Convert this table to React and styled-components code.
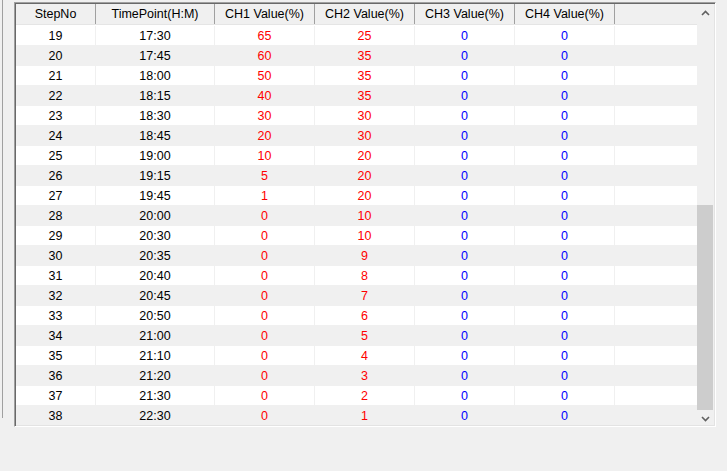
import React from "react";
import styled, { createGlobalStyle } from "styled-components";

const Global = createGlobalStyle`
  html, body { margin: 0; padding: 0; background: #f0f0f0; }
  body { font-family: "Liberation Sans", Arial, sans-serif; }
`;

const Page = styled.div`
  width: 727px;
  height: 471px;
  background: #f0f0f0;
  display: flex;
  align-items: flex-start;
  overflow: hidden;
`;

const SideEdge = styled.div`
  width: 1px;
  height: 418px;
  margin-left: 2px;
  background: #a0a0a0;
  flex: none;
`;

const Frame = styled.div`
  margin-left: 11px;
  margin-top: 2px;
  width: 702px;
  height: 425px;
  box-sizing: border-box;
  border-top: 1px solid #a0a0a0;
  border-left: 1px solid #a0a0a0;
  border-right: 1px solid #ffffff;
  border-bottom: 1px solid #ffffff;
  box-shadow: inset 1px 1px 0 #696969, inset -1px -1px 0 #e3e3e3;
  padding: 1px 1px 1px 1px;
  display: flex;
  flex: none;
  background: #ffffff;
`;

const ListArea = styled.div`
  flex: 1;
  display: flex;
  flex-direction: column;
  overflow: hidden;
  background: #ffffff;
`;

const cols = "80px 119px 100px 100px 100px 100px 1fr";

const HeaderRow = styled.div`
  display: grid;
  grid-template-columns: ${cols};
  height: 20px;
  background: #f0f0f0;
  border-bottom: 1px solid #e5e5e5;
  box-shadow: 0 1px 0 #ffffff;
  margin-bottom: 1px;
  flex: none;
`;

const HeaderCell = styled.div`
  display: flex;
  align-items: center;
  justify-content: center;
  font-size: 12.5px;
  color: #000000;
  border-right: ${(p) => (p.$last ? "none" : "1px solid #a0a0a0")};
  white-space: nowrap;
`;

const Row = styled.div`
  display: grid;
  grid-template-columns: ${cols};
  height: 20px;
  flex: none;
  background: ${(p) => (p.$alt ? "#f0f0f0" : "#ffffff")};
`;

const Cell = styled.div`
  display: flex;
  align-items: center;
  justify-content: center;
  font-size: 12.5px;
  color: ${(p) => p.$color || "#000000"};
  border-right: ${(p) => (p.$last ? "none" : "1px solid #f0f0f0")};
  border-bottom: 1px solid #f0f0f0;
  box-sizing: border-box;
`;

const Scrollbar = styled.div`
  width: 17px;
  flex: none;
  background: #f0f0f0;
  display: flex;
  flex-direction: column;
  align-items: stretch;
`;

const ArrowBtn = styled.div`
  height: 17px;
  display: flex;
  align-items: center;
  justify-content: center;
  flex: none;
`;

const Track = styled.div`
  flex: 1;
  display: flex;
  flex-direction: column;
  padding: 0 1px 0 0;
`;

const Thumb = styled.div`
  margin-top: 184px;
  height: 205px;
  background: #cdcdcd;
`;

const data = [
  [19, "17:30", 65, 25],
  [20, "17:45", 60, 35],
  [21, "18:00", 50, 35],
  [22, "18:15", 40, 35],
  [23, "18:30", 30, 30],
  [24, "18:45", 20, 30],
  [25, "19:00", 10, 20],
  [26, "19:15", 5, 20],
  [27, "19:45", 1, 20],
  [28, "20:00", 0, 10],
  [29, "20:30", 0, 10],
  [30, "20:35", 0, 9],
  [31, "20:40", 0, 8],
  [32, "20:45", 0, 7],
  [33, "20:50", 0, 6],
  [34, "21:00", 0, 5],
  [35, "21:10", 0, 4],
  [36, "21:20", 0, 3],
  [37, "21:30", 0, 2],
  [38, "22:30", 0, 1],
];

const Chevron = ({ up }) => (
  <svg width="9" height="6" viewBox="0 0 9 6">
    <polyline
      points={up ? "1,5 4.5,1.5 8,5" : "1,1 4.5,4.5 8,1"}
      fill="none"
      stroke="#606060"
      strokeWidth="1.6"
    />
  </svg>
);

export default function App() {
  const headers = [
    "StepNo",
    "TimePoint(H:M)",
    "CH1 Value(%)",
    "CH2 Value(%)",
    "CH3 Value(%)",
    "CH4 Value(%)",
    "",
  ];
  return (
    <>
      <Global />
      <Page>
        <SideEdge />
        <Frame>
          <ListArea>
            <HeaderRow>
              {headers.map((h, i) => (
                <HeaderCell key={i} $last={i === headers.length - 1}>
                  {h}
                </HeaderCell>
              ))}
            </HeaderRow>
            {data.map((r, i) => (
              <Row key={r[0]} $alt={i % 2 === 1}>
                <Cell>{r[0]}</Cell>
                <Cell>{r[1]}</Cell>
                <Cell $color="#ff0000">{r[2]}</Cell>
                <Cell $color="#ff0000">{r[3]}</Cell>
                <Cell $color="#0000ff">0</Cell>
                <Cell $color="#0000ff">0</Cell>
                <Cell $last />
              </Row>
            ))}
          </ListArea>
          <Scrollbar>
            <ArrowBtn>
              <Chevron up />
            </ArrowBtn>
            <Track>
              <Thumb />
            </Track>
            <ArrowBtn>
              <Chevron />
            </ArrowBtn>
          </Scrollbar>
        </Frame>
      </Page>
    </>
  );
}
